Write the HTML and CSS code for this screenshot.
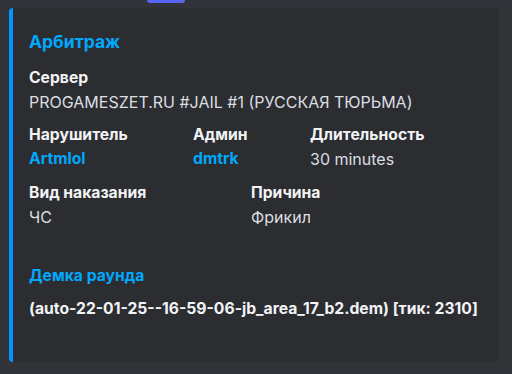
FILE: index.html
```html
<!DOCTYPE html>
<html>
    <head>
        <title>Арбитраж</title>
        <link rel="stylesheet" href="styles.css">
    </head>

<body>
    <div class="ust-buton"></div>
    <div class="embed">
        <div class="baslik">Арбитраж</div>
        <div class="alan">
            <div class="ad">Сервер</div>
            <div class="deger">PROGAMESZET.RU #JAIL #1 (РУССКАЯ ТЮРЬМА)</div>
        </div>
        <div class="satir uclu">
            <div class="alan">
                <div class="ad">Нарушитель</div>
                <div class="deger link">Artmlol</div>
            </div>
            <div class="alan">
                <div class="ad">Админ</div>
                <div class="deger link">dmtrk</div>
            </div>
            <div class="alan">
                <div class="ad">Длительность</div>
                <div class="deger">30 minutes</div>
            </div>
        </div>
        <div class="satir ikili">
            <div class="alan">
                <div class="ad">Вид наказания</div>
                <div class="deger">ЧС</div>
            </div>
            <div class="alan">
                <div class="ad">Причина</div>
                <div class="deger">Фрикил</div>
            </div>
        </div>
        <div class="alan demka">
            <div class="ad link">Демка раунда</div>
            <div class="deger kalin">(auto-22-01-25--16-59-06-jb_area_17_b2.dem) [тик: 2310]</div>
        </div>
    </div>
</body>
</html>
```
FILE: styles.css
```css
body{
    margin: 0;
    background: #313338;
    font-family: Inter, sans-serif;
    height: 374px;
    overflow: hidden;
}
.ust-buton{
    width: 38px;
    height: 3px;
    margin-left: 147px;
    background: #5865f2;
    border-radius: 0 0 3px 3px;
}
.embed{
    margin: 5px 0 0 9px;
    padding: 8px 16px 0 16px;
    box-sizing: border-box;
    width: 490px;
    height: 354px;
    background: #2b2d31;
    border-left: 4px solid #0096ff;
    border-radius: 4px;
}
.baslik{
    color: #00a8fc;
    font-size: 17.5px;
    font-weight: bold;
    line-height: 22px;
    margin-top: 15px;
}
.alan{
    font-size: 16px;
}
.ad{
    color: #f2f3f5;
    font-size: 15.7px;
    font-weight: bold;
    line-height: 20px;
}
.deger{
    color: #dbdee1;
    line-height: 20px;
    margin-top: 4px;
}
.link{
    color: #00a8fc;
    font-size: 15.7px;
    font-weight: bold;
}
.kalin{
    color: #f2f3f5;
    font-size: 15.7px;
    font-weight: bold;
}
.baslik + .alan{
    margin-top: 15px;
}
.satir{
    display: grid;
    margin-top: 14px;
}
.uclu{
    margin-top: 13px;
    grid-template-columns: 164px 117px auto;
}
.ikili{
    grid-template-columns: 222px auto;
}
.demka{
    margin-top: 39px;
}
.demka .deger{
    margin-top: 13px;
}
```
